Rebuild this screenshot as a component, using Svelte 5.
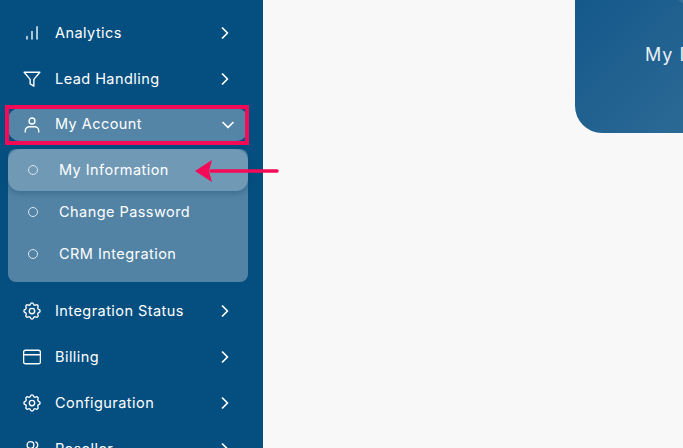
<script>
  const before = [
    { label: "Analytics", icon: "bars" },
    { label: "Lead Handling", icon: "filter" },
  ];
  const after = [
    { label: "Integration Status", icon: "gear" },
    { label: "Billing", icon: "card" },
    { label: "Configuration", icon: "gear" },
    { label: "Reseller", icon: "users" },
  ];
  const subItems = [
    { label: "My Information", active: true },
    { label: "Change Password" },
    { label: "CRM Integration" },
  ];
</script>

{#snippet icon(name)}
  <svg class="icon" viewBox="0 0 24 24" fill="none" stroke="currentColor" stroke-width="1.8" stroke-linecap="round" stroke-linejoin="round">
    {#if name === "bars"}
      <path d="M5.3 20v-3.5M12 20v-10M18.7 20V3.5" />
    {:else if name === "filter"}
      <path d="M1.5 3h21l-8 9.5v9l-5-3v-6z" />
    {:else if name === "user"}
      <circle cx="12" cy="6.7" r="4" />
      <path d="M3 21.3v-1.5a5.5 5.5 0 0 1 5.5-5.5h7a5.5 5.5 0 0 1 5.5 5.5v1.5" />
    {:else if name === "gear"}
      <g transform="translate(12 12) scale(1.2) translate(-12 -12)" stroke-width="1.5">
        <circle cx="12" cy="12" r="3" />
        <path d="M10.325 4.317c.426-1.756 2.924-1.756 3.35 0a1.724 1.724 0 0 0 2.573 1.066c1.543-.94 3.31.826 2.37 2.37a1.724 1.724 0 0 0 1.065 2.572c1.756.426 1.756 2.924 0 3.35a1.724 1.724 0 0 0-1.066 2.573c.94 1.543-.826 3.31-2.37 2.37a1.724 1.724 0 0 0-2.572 1.065c-.426 1.756-2.924 1.756-3.35 0a1.724 1.724 0 0 0-2.573-1.066c-1.543.94-3.31-.826-2.37-2.37a1.724 1.724 0 0 0-1.065-2.572c-1.756-.426-1.756-2.924 0-3.35a1.724 1.724 0 0 0 1.066-2.573c-.94-1.543.826-3.31 2.37-2.37c1 .608 2.296.07 2.572-1.065z" />
      </g>
    {:else if name === "card"}
      <rect x="0.8" y="3" width="22.4" height="18" rx="2.5" />
      <path d="M0.8 9h22.4" />
    {:else if name === "users"}
      <circle cx="10" cy="6.7" r="4.5" />
      <path d="M2 21.3v-1.5a5.5 5.5 0 0 1 5.5-5.5h5a5.5 5.5 0 0 1 5.5 5.5v1.5M17 2.6a4.5 4.5 0 0 1 0 8.2" />
    {/if}
  </svg>
{/snippet}

{#snippet chevron()}
  <svg class="chev" viewBox="0 0 10 14" fill="none" stroke="currentColor" stroke-width="1.7" stroke-linecap="round" stroke-linejoin="round">
    <path d="M2.5 2l5 5-5 5" />
  </svg>
{/snippet}

<div class="page">
  <aside class="sidebar">
    <nav class="menu">
      {#each before as item}
        <div class="row">
          {@render icon(item.icon)}
          <span class="label">{item.label}</span>
          {@render chevron()}
        </div>
      {/each}

      <div class="row open">
        {@render icon("user")}
        <span class="label">My Account</span>
        <svg class="chev down" viewBox="0 0 14 10" fill="none" stroke="currentColor" stroke-width="1.7" stroke-linecap="round" stroke-linejoin="round">
          <path d="M2 2.5l5 5 5-5" />
        </svg>
      </div>

      <div class="sub">
        {#each subItems as item}
          <div class="sub-row" class:active={item.active}>
            <span class="dot"></span>
            <span class="label">{item.label}</span>
          </div>
        {/each}
      </div>

      {#each after as item}
        <div class="row">
          {@render icon(item.icon)}
          <span class="label">{item.label}</span>
          {@render chevron()}
        </div>
      {/each}
    </nav>
  </aside>

  <main class="content">
    <div class="hero">
      <span class="hero-title">My Information</span>
    </div>
  </main>

  <div class="highlight"></div>
  <svg class="arrow" viewBox="0 0 88 26">
    <path d="M84 13H18" stroke="#f50a57" stroke-width="3.5" stroke-linecap="round" />
    <path d="M2 13L19 2l-3 11 3 11z" fill="#f50a57" />
  </svg>
</div>

<style>
  :global(body) {
    margin: 0;
  }
  .page {
    position: relative;
    display: flex;
    width: 683px;
    height: 448px;
    overflow: hidden;
    background: #f8f8f8;
    font-family: "Inter", "Open Sans", sans-serif;
  }
  .sidebar {
    flex: 0 0 263px;
    background: #054f80;
    color: #fff;
  }
  .menu {
    display: flex;
    flex-direction: column;
    padding: 10px 15px 0 8px;
  }
  .row {
    display: flex;
    align-items: center;
    height: 46px;
    padding-left: 15px;
    font-size: 14.5px;
    letter-spacing: 0.45px;
  }
  .icon {
    flex: none;
    width: 18px;
    height: 18px;
    margin-right: 14px;
  }
  .label {
    flex: 1;
    padding-bottom: 2px;
    white-space: nowrap;
  }
  .chev {
    flex: none;
    width: 10px;
    height: 14px;
    margin-right: 18px;
  }
  .chev.down {
    width: 14px;
    height: 10px;
    margin-right: 13px;
  }
  .open {
    height: 33px;
    margin: 6px 0 8px;
    background: #5585a6;
    border-radius: 12px;
  }
  .sub {
    display: flex;
    flex-direction: column;
    height: 133px;
    margin-bottom: 6px;
    background: #5283a5;
    border-radius: 8px;
    font-size: 14.5px;
    letter-spacing: 0.45px;
  }
  .sub-row {
    display: flex;
    align-items: center;
    height: 42px;
    padding-left: 20px;
  }
  .sub-row.active {
    background: #7099b6;
    border-radius: 12px;
    box-shadow: 0 2px 6px rgba(5, 60, 100, 0.35);
  }
  .dot {
    flex: none;
    width: 8px;
    height: 8px;
    margin-right: 21px;
    border: 1.3px solid #dce6ee;
    border-radius: 50%;
  }
  .content {
    flex: 1;
    position: relative;
  }
  .hero {
    position: relative;
    display: flex;
    align-items: center;
    width: 200px;
    height: 133px;
    margin-left: 312px;
    padding-left: 70px;
    box-sizing: border-box;
    overflow: hidden;
    border-radius: 0 0 0 27px;
    background: linear-gradient(135deg, #14588a, #35709a);
    color: #e8f0f6;
    font-size: 18px;
    letter-spacing: 1px;
  }
  .hero::after {
    content: "";
    position: absolute;
    left: 88px;
    top: -34px;
    width: 60px;
    height: 40px;
    background: rgba(255, 255, 255, 0.1);
    transform: rotate(35deg);
  }
  .hero-title {
    margin-top: -24px;
    white-space: nowrap;
  }
  .highlight {
    position: absolute;
    left: 5px;
    top: 105px;
    width: 244px;
    height: 40px;
    box-sizing: border-box;
    border: 4px solid #f50a57;
  }
  .arrow {
    position: absolute;
    left: 193px;
    top: 158px;
    width: 88px;
    height: 26px;
  }
</style>
